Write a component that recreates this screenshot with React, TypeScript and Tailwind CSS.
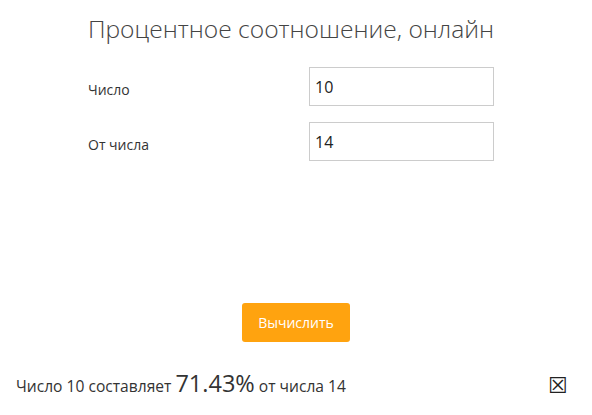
import React from "react";

export default function App() {
  return (
    <div className="w-[592px] h-[415px] bg-white text-[#333] relative" style={{ fontFamily: '"Open Sans", sans-serif' }}>
      <h1 className="pt-[13px] pr-[10px] text-center text-[24.6px] font-light text-[#444] leading-[32px]">
        Процентное соотношение, онлайн
      </h1>
      <div className="mt-[22px] pl-[88px] pr-[98px] flex flex-col gap-[16px]">
        <div className="flex items-center justify-between">
          <span className="mt-[5px] text-[14px]">Число</span>
          <input
            defaultValue="10"
            className="w-[185px] h-[39px] border border-[#ccc] px-[5px] text-[16px] text-[#222] outline-none"
          />
        </div>
        <div className="flex items-center justify-between">
          <span className="mt-[5px] text-[14px]">От числа</span>
          <input
            defaultValue="14"
            className="w-[185px] h-[39px] border border-[#ccc] px-[5px] text-[16px] text-[#222] outline-none"
          />
        </div>
      </div>
      <div className="mt-[142px] flex justify-center">
        <button className="w-[108px] h-[39px] rounded-[3px] bg-[#ffa30f] text-white text-[14px]">
          Вычислить
        </button>
      </div>
      <div className="mt-[24px] pl-[16px] pr-[24px] flex items-center justify-between">
        <p className="text-[15.6px] text-[#333]">
          Число 10 составляет <span className="text-[23.5px]">71.43%</span> от числа 14
        </p>
        <span className="text-[22px] leading-none text-[#222]">☒</span>
      </div>
    </div>
  );
}
